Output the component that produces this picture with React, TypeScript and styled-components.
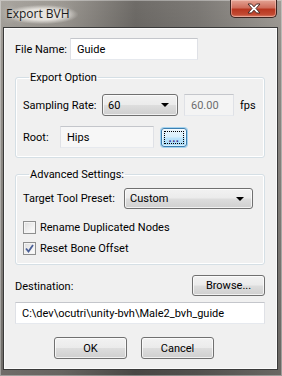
import React from 'react';
import styled, { createGlobalStyle, css } from 'styled-components';

const GlobalStyle = createGlobalStyle`
  html, body {
    margin: 0;
    padding: 0;
    width: 282px;
    height: 376px;
    overflow: hidden;
  }
  body {
    font-family: Roboto, "Liberation Sans", sans-serif;
    font-size: 11px;
    color: #000;
  }
`;

const Window = styled.div`
  width: 282px;
  height: 376px;
  box-sizing: border-box;
  display: flex;
  flex-direction: column;
  padding: 0 4px 6px 3px;
  background:
    linear-gradient(to bottom, rgba(0, 0, 0, 0) 0%, rgba(0, 0, 0, 0.1) 15%, rgba(0, 0, 0, 0.35) 100%),
    linear-gradient(90deg, #a9a59f 0%, #9d9993 22%, #6f6c68 48%, #7d7a76 70%, #a29e98 100%);
  box-shadow: inset 0 0 0 1px rgba(255, 255, 255, 0.35);
`;

const TitleBar = styled.div`
  height: 27px;
  flex: none;
  display: flex;
  align-items: flex-start;
  justify-content: space-between;
  padding-left: 3px;
`;

const Title = styled.span`
  margin-top: 5px;
  font-family: "Open Sans", "Noto Sans", sans-serif;
  font-size: 12px;
  color: #1a1a1a;
  padding: 0 8px 2px 0;
  background: radial-gradient(ellipse at center, rgba(236, 233, 228, 0.9) 40%, rgba(236, 233, 228, 0) 72%);
  text-shadow: 0 0 6px #efece7;
`;

const CloseButton = styled.div`
  width: 47px;
  height: 18px;
  margin-right: 1px;
  box-sizing: border-box;
  display: flex;
  align-items: center;
  justify-content: center;
  border: 1px solid #3b2420;
  border-top: none;
  border-radius: 0 0 5px 5px;
  background: linear-gradient(to bottom, #e3a394 0%, #cf6e5c 45%, #b8361f 55%, #c24a32 85%, #d9846e 100%);
  box-shadow: inset 0 0 0 1px rgba(255, 220, 210, 0.45);
`;

const Client = styled.div`
  flex: 1;
  display: flex;
  flex-direction: column;
  background: #f0f0f0;
  border: 1px solid #3a3a3a;
  box-shadow: inset 0 0 0 1px #fbfbfb;
  padding: 10px 12px 0 11px;
`;

const Row = styled.div<{ gap?: number; mt?: number }>`
  display: flex;
  align-items: center;
  gap: ${({ gap }) => gap ?? 0}px;
  margin-top: ${({ mt }) => mt ?? 0}px;
`;

const Label = styled.span<{ w?: number }>`
  ${({ w }) => w !== undefined && css`width: ${w}px; flex: none;`}
  white-space: nowrap;
`;

const TextInput = styled.div<{ w?: number; h?: number; disabled?: boolean; readOnly?: boolean }>`
  box-sizing: border-box;
  width: ${({ w }) => (w ? `${w}px` : 'auto')};
  ${({ w }) => !w && 'flex: 1;'}
  height: ${({ h }) => h ?? 22}px;
  display: flex;
  align-items: center;
  padding: 0 6px;
  border: 1px solid;
  border-color: #c4c6cb #dfe1e6 #e6e9ee #dfe1e6;
  background: ${({ disabled, readOnly }) => (disabled ? '#f4f4f4' : readOnly ? '#f7f7f7' : '#fff')};
  color: ${({ disabled }) => (disabled ? '#6d6d6d' : '#000')};
  white-space: nowrap;
`;

const buttonFace = css`
  box-sizing: border-box;
  border: 1px solid #707070;
  border-radius: 3px;
  background: linear-gradient(to bottom, #f2f2f2 0%, #ebebeb 48%, #dddddd 52%, #cfcfcf 100%);
  box-shadow: inset 0 0 0 1px rgba(255, 255, 255, 0.7);
`;

const Combo = styled.div<{ w: number; h?: number }>`
  ${buttonFace}
  width: ${({ w }) => w}px;
  height: ${({ h }) => h ?? 22}px;
  display: flex;
  align-items: center;
  justify-content: space-between;
  padding: 0 8px 0 5px;
  flex: none;
`;

const Arrow = styled.span`
  width: 0;
  height: 0;
  border-left: 4px solid transparent;
  border-right: 4px solid transparent;
  border-top: 4px solid #000;
`;

const Button = styled.div<{ w: number; h?: number; focused?: boolean }>`
  ${buttonFace}
  width: ${({ w }) => w}px;
  height: ${({ h }) => h ?? 22}px;
  display: flex;
  align-items: center;
  justify-content: center;
  flex: none;
  ${({ focused }) =>
    focused &&
    css`
      position: relative;
      border-color: #3c7fb1;
      background: linear-gradient(to bottom, #eaf6fd 0%, #d9f0fc 48%, #bee6fd 52%, #a7d9f5 100%);
      box-shadow: 0 0 0 1px rgba(102, 187, 238, 0.55), inset 0 0 0 1px rgba(255, 255, 255, 0.6);
      &::after {
        content: '';
        position: absolute;
        inset: 2px;
        border: 1px dotted #000;
      }
    `}
`;

const Dots = styled.span`
  color: #3b2a8a;
  font-weight: bold;
  letter-spacing: 0.5px;
  margin-top: 3px;
`;

const Group = styled.fieldset<{ mt: number; pt: number }>`
  margin: ${({ mt }) => mt}px 0 0;
  padding: ${({ pt }) => pt}px 8px 9px 7px;
  border: 1px solid #d5dfe5;
  border-radius: 3px;
  box-shadow: inset 0 0 0 1px #fff;
  min-width: 0;
`;

const Legend = styled.legend`
  padding: 0 1px;
  margin-left: 6px;
  line-height: 13px;
`;

const CheckRow = styled.label<{ mt: number }>`
  display: flex;
  align-items: center;
  gap: 4px;
  margin-top: ${({ mt }) => mt}px;
`;

const CheckBox = styled.span`
  width: 13px;
  height: 13px;
  box-sizing: border-box;
  flex: none;
  display: flex;
  align-items: center;
  justify-content: center;
  border: 1px solid #8e8f8f;
  background: linear-gradient(135deg, #dcdcdc 0%, #f2f2f2 60%, #ffffff 100%);
  box-shadow: inset 0 0 0 1px #f4f4f4;
`;

const ButtonBar = styled.div`
  display: flex;
  gap: 14px;
  padding-left: 39px;
  margin-top: 13px;
`;

const CloseGlyph = () => (
  <svg width="16" height="11" viewBox="0 0 16 11">
    <path
      d="M2 1 L5.5 1 L8 3.8 L10.5 1 L14 1 L10 5.5 L14 10 L10.5 10 L8 7.2 L5.5 10 L2 10 L6 5.5 Z"
      fill="#ffffff"
      stroke="#4a2a26"
      strokeWidth="1"
      strokeLinejoin="round"
    />
  </svg>
);

const CheckMark = () => (
  <svg width="9" height="9" viewBox="0 0 9 9">
    <path d="M1 4.5 L3.5 7.5 L8 1" fill="none" stroke="#4a5f97" strokeWidth="1.8" />
  </svg>
);

export default function App() {
  return (
    <>
      <GlobalStyle />
      <Window>
        <TitleBar>
          <Title>Export BVH</Title>
          <CloseButton>
            <CloseGlyph />
          </CloseButton>
        </TitleBar>
        <Client>
          <Row>
            <Label w={55}>File Name:</Label>
            <TextInput w={128}>Guide</TextInput>
          </Row>

          <Group mt={11} pt={10}>
            <Legend>Export Option</Legend>
            <Row gap={6}>
              <Label w={73}>Sampling Rate:</Label>
              <Combo w={76}>
                <span>60</span>
                <Arrow />
              </Combo>
              <TextInput w={50} disabled>
                60.00
              </TextInput>
              <Label>fps</Label>
            </Row>
            <Row mt={10}>
              <Label w={37}>Root:</Label>
              <TextInput w={94} readOnly>
                Hips
              </TextInput>
              <span style={{ width: 7 }} />
              <Button w={26} h={19} focused>
                <Dots>...</Dots>
              </Button>
            </Row>
          </Group>

          <Group mt={10} pt={7}>
            <Legend>Advanced Settings:</Legend>
            <Row>
              <Label w={101}>Target Tool Preset:</Label>
              <Combo w={129} h={21}>
                <span>Custom</span>
                <Arrow />
              </Combo>
            </Row>
            <CheckRow mt={12}>
              <CheckBox />
              Rename Duplicated Nodes
            </CheckRow>
            <CheckRow mt={8}>
              <CheckBox>
                <CheckMark />
              </CheckBox>
              Reset Bone Offset
            </CheckRow>
          </Group>

          <Row mt={10}>
            <Label style={{ flex: 1, marginTop: 2 }}>Destination:</Label>
            <Button w={73} h={21}>
              Browse...
            </Button>
          </Row>
          <Row mt={6}>
            <TextInput>C:\dev\ocutri\unity-bvh\Male2_bvh_guide</TextInput>
          </Row>
          <ButtonBar>
            <Button w={73} h={22}>
              OK
            </Button>
            <Button w={73} h={22}>
              Cancel
            </Button>
          </ButtonBar>
        </Client>
      </Window>
    </>
  );
}
